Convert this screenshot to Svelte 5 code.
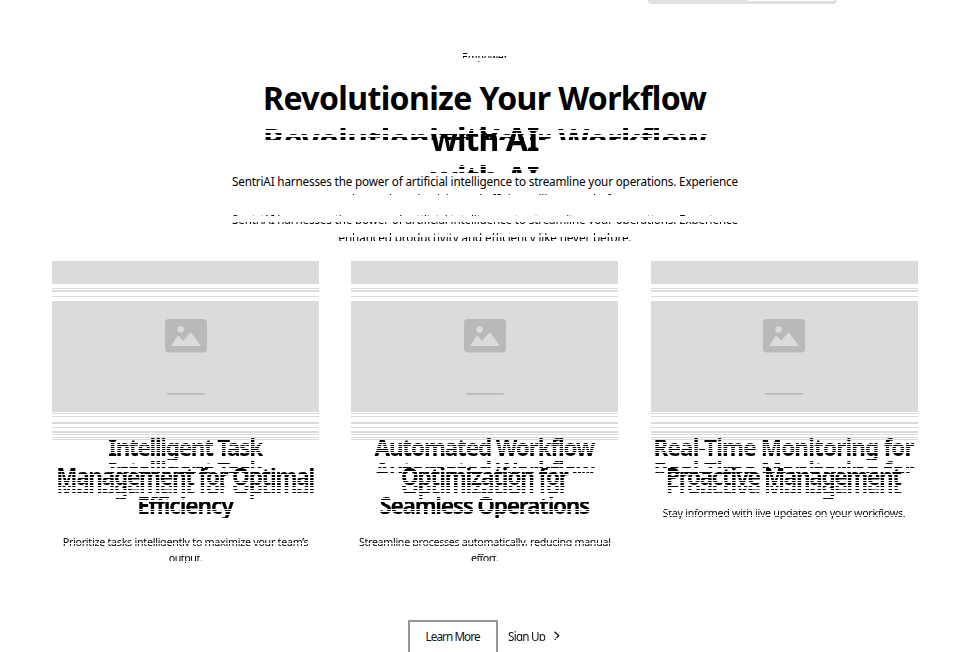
<script>
  const seg = (...pairs) => pairs;
  const bands = [[261,284],[288,289],[290,292],[296,297],[301,412],[413,414],[416,417],[422,424],[427,428],[431,433],[434,435],[437,438],[439,440]];
  const first = [[438,439],[440,442],[443,444],[445,446],[447,448],[449,450],[451,452],[453,456],[457,458],[459,460]];
  const echo = [[461,462],[463,464],[467,468],[472,473]];
  const second = [[468,471],[472,474],[475,477],[478,480],[481,482],[483,485],[487,488]];
  const echo2 = [[486,487],[489,490],[492,493],[495,496],[498,499]];
  const third = [[497,498],[499,500],[502,509],[510,511],[512,514],[515,518]];
  const note = [[538,543],[544,546]];
  const note2 = [[551,552],[554,555],[556,561],[562,563]];
  const cards = [
    {
      title: [['Intelligent Task', 155], ['Management for Optimal', 259], ['Efficiency', 97]],
      text: [['Prioritize tasks intelligently to maximize your team\u2019s', 246, 534, note], ['output.', 34, 550, note2]]
    },
    {
      title: [['Automated Workflow', 221], ['Optimization for', 168], ['Seamless Operations', 211]],
      text: [['Streamline processes automatically, reducing manual', 252, 534, note], ['effort.', 28, 550, note2]]
    },
    {
      title: [['Real-Time Monitoring for', 261], ['Proactive Management', 236]],
      text: [['Stay informed with live updates on your workflows.', 243, 505, [[509,510],[511,515],[516,519],[520,521]]]]
    }
  ];
  const titleRows = [first, second, third];
  const echoRows = [echo, echo2];

  // Builds a scan-line mask from the visible row intervals.
  function mask(rows, top) {
    if (!rows) return '';
    const stops = ['transparent 0'];
    for (const [a, b] of rows) {
      const s = Math.max(0, a - top), e = b - top;
      stops.push(`transparent ${s}px`, `#000 ${s}px`, `#000 ${e}px`, `transparent ${e}px`);
    }
    return `mask-image:linear-gradient(${stops.join(',')})`;
  }

  // Tracks a line of text out to its set width.
  function fit(node, width) {
    const natural = node.getBoundingClientRect().width;
    const gap = (width - natural) / (node.textContent.length - 1);
    node.style.letterSpacing = gap + 'px';
    node.style.marginRight = -gap + 'px';
  }
</script>

{#snippet line(text, width, top, rows, cls = '')}
  <span class="line {cls}" style={mask(rows, top)}><span use:fit={width}>{text}</span></span>
{/snippet}

<main>
  <div class="tabs"><i></i></div>

  <header>
    <div class="tag">{@render line('Empower', 46, 49, seg([53,54],[56,58],[61,62]))}</div>
    <h1>
      {@render line('Revolutionize Your Workflow', 444, 77, null)}
      {@render line('with AI', 109, 118, seg([127,130],[131,133],[134,151]))}
      {@render line('Revolutionize Your Workflow', 444, 119, seg([125,126],[128,130],[133,135],[137,140]), 'ghost g1')}
      {@render line('with AI', 109, 157, seg([165,166],[167,169],[170,173]), 'ghost g2')}
    </h1>
    <div class="lead">
      {@render line('SentriAI harnesses the power of artificial intelligence to streamline your operations. Experience', 506, 172, null)}
      {@render line('enhanced productivity and efficiency like never before.', 293, 190, seg([194,195]))}
      <div class="again">
        {@render line('SentriAI harnesses the power of artificial intelligence to streamline your operations. Experience', 506, 210, seg([215,216],[222,224]))}
        {@render line('enhanced productivity and efficiency like never before.', 293, 228, seg([233,235],[237,241]))}
      </div>
    </div>
  </header>

  <section class="cards">
    {#each cards as card}
      <article>
        <div class="picture" style={mask(bands, 261)}>
          <svg viewBox="0 0 42 76" width="42" height="76">
            <rect width="42" height="33.5" rx="4" fill="#b9b9b9" />
            <circle cx="15.6" cy="10.5" r="3.2" fill="#dbdbdb" />
            <path d="M6 27 L12.5 17 Q13 16.4 13.6 17 L18 21.7 L25 14 Q25.7 13.3 26.4 14.1 L36 27Z" fill="#dbdbdb" />
            <path d="M1 74H41Q40 75.7 37 75.7H5Q2 75.7 1 74Z" fill="#b9b9b9" />
          </svg>
        </div>
        <h2>
          {#each card.title as [text, width], i}
            <span class="row">
              {@render line(text, width, 433 + 29 * i, titleRows[i])}
              {#if i < echoRows.length}
                {@render line(text, width, i ? 472 : 456, echoRows[i], i ? 'ghost e2' : 'ghost e1')}
              {/if}
            </span>
          {/each}
        </h2>
        <div class="text">
          {#each card.text as [text, width, top, rows]}
            {@render line(text, width, top, rows)}
          {/each}
        </div>
      </article>
    {/each}
  </section>

  <footer>
    <button class="learn"><span use:fit={55}>Learn More</span></button>
    <button class="sign">
      <span class="clip"><span use:fit={38}>Sign Up</span></span>
      <svg width="8" height="10" viewBox="0 0 8 10"><path d="M1.5 .8L5.7 4.6L3.5 7M2.8 7.9L1.8 8.9" fill="none" stroke="#111" stroke-width="1.3" /></svg>
    </button>
  </footer>
</main>

<style>
  :global(body) { margin: 0; background: #fff; overflow: hidden; }
  main {
    height: 652px; overflow: hidden; background: #fff; color: #000;
    font-family: "Noto Sans", "Open Sans", sans-serif;
  }
  .tabs {
    width: 189px; height: 4px; margin-left: 648px; background: #e1e1dd;
    border-radius: 0 0 5px 5px; box-sizing: border-box; padding: 0 3px 0 100px;
  }
  .tabs i { display: block; height: 1px; background: #fff; }
  header { padding: 45px 48px 0 52px; text-align: center; }
  .line { white-space: nowrap; display: flex; justify-content: center; }
  .tag { height: 16px; font-size: 10.5px; line-height: 16px; }
  h1 { position: relative; margin: 12px 0 0; height: 95px; font-size: 32px; line-height: 41px; font-weight: 700; }
  .ghost { position: absolute; left: 0; right: 0; }
  .g1 { top: 42px; }
  .g2 { top: 80px; }
  .lead { font-size: 11.7px; line-height: 18px; height: 89px; }
  .again { padding-top: 2px; }
  .cards { display: grid; grid-template-columns: repeat(3, 267px); justify-content: space-between; padding: 0 48.4px 0 52.2px; height: 359px; }
  .picture { height: 179px; background: #dbdbdb; display: flex; justify-content: center; align-items: flex-start; }
  .picture svg { margin-top: 58px; }
  h2 { margin: -7px 0 14px; font-size: 22.5px; line-height: 29px; font-weight: 700; }
  .row { display: block; position: relative; }
  .e1 { top: 23px; }
  .e2 { top: 10px; }
  .text { font-size: 10.7px; line-height: 16px; }
  footer { display: flex; justify-content: flex-start; padding-left: 408px; gap: 10px; }
  button { font-family: inherit; font-size: 11.7px; line-height: 18px; color: #111; background: none; border: 0; padding: 0; height: 36px; box-sizing: border-box; }
  .learn { width: 90px; border: 2px solid #969696; display: flex; justify-content: center; padding-top: 5px; }
  .sign { display: flex; padding-top: 7px; gap: 7px; white-space: nowrap; }
  .sign svg { margin-top: 4px; }
  .clip { height: 18px; mask-image: linear-gradient(#000 14px, transparent 14px); }
</style>
